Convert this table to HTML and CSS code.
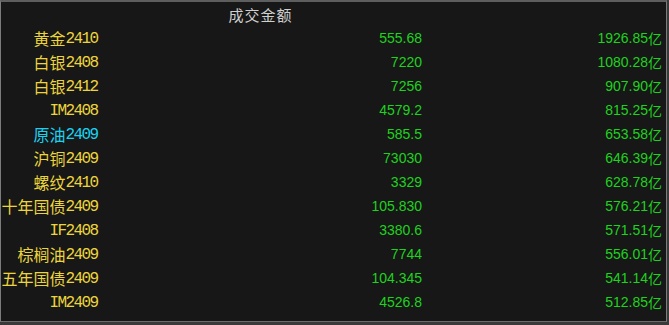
FILE: index.html
```html
<!DOCTYPE html>
<html>
<head>
<meta charset="utf-8">
<link rel="stylesheet" href="styles.css">
</head>
<body>
<div class="panel">
  <div class="grid">
    <div class="hd"></div>
    <div class="hd hd-mid">成交金额</div>
    <div class="hd"></div>

    <div class="name"><span class="cjk">黄金</span><span class="num">2410</span></div>
    <div class="val">555.68</div>
    <div class="amt">1926.85<span class="yi">亿</span></div>

    <div class="name"><span class="cjk">白银</span><span class="num">2408</span></div>
    <div class="val">7220</div>
    <div class="amt">1080.28<span class="yi">亿</span></div>

    <div class="name"><span class="cjk">白银</span><span class="num">2412</span></div>
    <div class="val">7256</div>
    <div class="amt">907.90<span class="yi">亿</span></div>

    <div class="name"><span class="num">IM2408</span></div>
    <div class="val">4579.2</div>
    <div class="amt">815.25<span class="yi">亿</span></div>

    <div class="name cyan"><span class="cjk">原油</span><span class="num">2409</span></div>
    <div class="val">585.5</div>
    <div class="amt">653.58<span class="yi">亿</span></div>

    <div class="name"><span class="cjk">沪铜</span><span class="num">2409</span></div>
    <div class="val">73030</div>
    <div class="amt">646.39<span class="yi">亿</span></div>

    <div class="name"><span class="cjk">螺纹</span><span class="num">2410</span></div>
    <div class="val">3329</div>
    <div class="amt">628.78<span class="yi">亿</span></div>

    <div class="name"><span class="cjk">十年国债</span><span class="num">2409</span></div>
    <div class="val">105.830</div>
    <div class="amt">576.21<span class="yi">亿</span></div>

    <div class="name"><span class="num">IF2408</span></div>
    <div class="val">3380.6</div>
    <div class="amt">571.51<span class="yi">亿</span></div>

    <div class="name"><span class="cjk">棕榈油</span><span class="num">2409</span></div>
    <div class="val">7744</div>
    <div class="amt">556.01<span class="yi">亿</span></div>

    <div class="name"><span class="cjk">五年国债</span><span class="num">2409</span></div>
    <div class="val">104.345</div>
    <div class="amt">541.14<span class="yi">亿</span></div>

    <div class="name"><span class="num">IM2409</span></div>
    <div class="val">4526.8</div>
    <div class="amt">512.85<span class="yi">亿</span></div>
  </div>
</div>
</body>
</html>
```

FILE: styles.css
```css
html, body {
  margin: 0;
  padding: 0;
}
body {
  background: #3a3a3a;
  width: 669px;
  height: 325px;
  overflow: hidden;
}
.panel {
  box-sizing: border-box;
  width: 667px;
  height: 322px;
  background: #171717;
  border-top: 2px solid #5e5e5e;
  border-left: 1px solid #7c7c7c;
  border-right: 1px solid #7c7c7c;
  border-bottom: 1px solid #6c6c6c;
}
.grid {
  display: grid;
  grid-template-columns: 98px 323px 1fr;
  grid-auto-rows: 24px;
  padding-right: 4px;
}
.grid > div {
  display: flex;
  align-items: center;
  white-space: nowrap;
}
.hd {
  font-family: "Noto Sans CJK SC", sans-serif;
  font-size: 15px;
  color: #cfcfcf;
}
.hd-mid {
  justify-content: center;
  letter-spacing: 1px;
}
.name {
  justify-content: flex-end;
  color: #ecd43c;
}
.name.cyan {
  color: #19d2f0;
}
.cjk {
  font-family: "Noto Sans CJK SC", sans-serif;
  font-size: 16px;
  line-height: 20px;
}
.num {
  font-family: "Liberation Mono", monospace;
  font-size: 16px;
  line-height: 20px;
  letter-spacing: -1.6px;
  margin-right: 1.6px;
  padding-top: 2px;
}
.val, .amt {
  justify-content: flex-end;
  font-family: "Liberation Sans", Arial, sans-serif;
  font-size: 14px;
  color: #1ed21e;
}
.yi {
  font-family: "Noto Sans CJK SC", sans-serif;
  font-size: 14px;
}
```
